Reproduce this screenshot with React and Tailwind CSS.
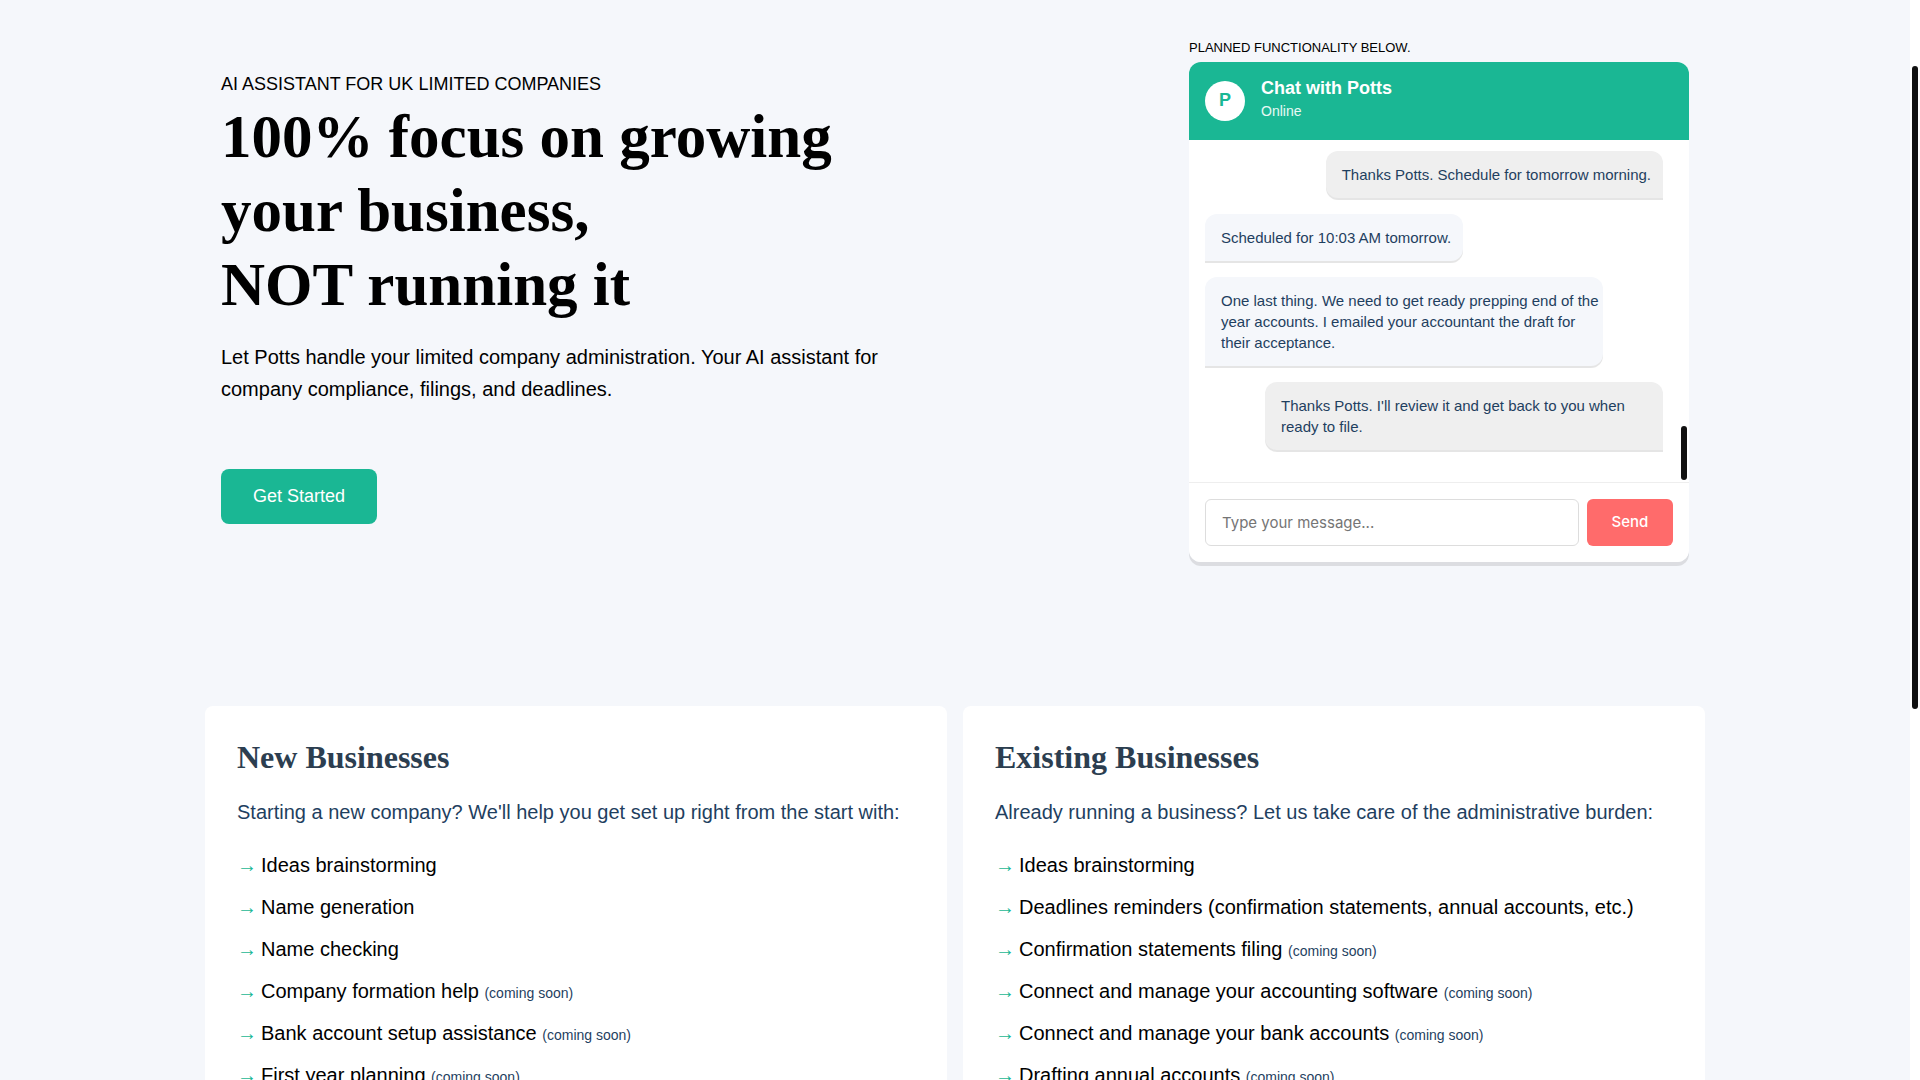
import { useState } from 'react'
import { clsx } from 'clsx'

const MESSAGES = [
  { from: 'user', text: 'Thanks Potts. Schedule for tomorrow morning.' },
  { from: 'potts', text: 'Scheduled for 10:03 AM tomorrow.' },
  {
    from: 'potts',
    text: 'One last thing. We need to get ready prepping end of the year accounts. I emailed your accountant the draft for their acceptance.',
    long: true,
  },
  { from: 'user', text: "Thanks Potts. I'll review it and get back to you when ready to file.", long: true },
]

const PLANS = [
  {
    title: 'New Businesses',
    intro: "Starting a new company? We'll help you get set up right from the start with:",
    items: [
      { label: 'Ideas brainstorming' },
      { label: 'Name generation' },
      { label: 'Name checking' },
      { label: 'Company formation help', soon: true },
      { label: 'Bank account setup assistance', soon: true },
      { label: 'First year planning', soon: true },
    ],
  },
  {
    title: 'Existing Businesses',
    intro: 'Already running a business? Let us take care of the administrative burden:',
    items: [
      { label: 'Ideas brainstorming' },
      { label: 'Deadlines reminders (confirmation statements, annual accounts, etc.)' },
      { label: 'Confirmation statements filing', soon: true },
      { label: 'Connect and manage your accounting software', soon: true },
      { label: 'Connect and manage your bank accounts', soon: true },
      { label: 'Drafting annual accounts', soon: true },
    ],
  },
]

function Message({ from, text, long }) {
  const isUser = from === 'user'
  return (
    <div
      className={clsx(
        'max-w-[398px] rounded-xl py-[13px] pl-4 text-[15px] leading-[21px] text-[#1f3f5f] shadow-[0_2px_0_rgba(0,0,0,0.1)]',
        long ? 'pr-[2px]' : 'pr-3',
        isUser ? 'self-end rounded-br-none bg-[#efefef]' : 'self-start rounded-bl-none bg-[#f5f7fb]',
      )}
    >
      {text}
    </div>
  )
}

function Chat() {
  const [draft, setDraft] = useState('')

  return (
    <div className="overflow-hidden rounded-xl bg-white">
      <div className="flex h-[78px] items-center gap-4 bg-[#1ab794] px-4">
        <div className="flex size-10 items-center justify-center rounded-full bg-white pb-0.5 text-lg font-bold text-[#1ab794]">
          P
        </div>
        <div className="pb-1">
          <h3 className="text-lg leading-6 font-bold text-white">Chat with Potts</h3>
          <p className="text-sm leading-[22px] text-white/90">Online</p>
        </div>
      </div>

      <div className="relative flex flex-col gap-4 pt-[11px] pr-[26px] pb-8 pl-4">
        {MESSAGES.map((message) => (
          <Message key={message.text} {...message} />
        ))}
        <div className="absolute right-[2px] bottom-[2px] h-[54px] w-[6px] rounded-full bg-[#111]" />
      </div>

      <form
        className="flex gap-2 border-t border-[#eee] p-4 font-[Inter,sans-serif] text-[15px]"
        onSubmit={(e) => {
          e.preventDefault()
          setDraft('')
        }}
      >
        <input
          type="text"
          aria-label="Message"
          placeholder="Type your message..."
          value={draft}
          onChange={(e) => setDraft(e.target.value)}
          className="h-[47px] min-w-0 flex-1 rounded-md border border-[#ddd] px-4 placeholder:text-[#757575]"
        />
        <button type="submit" className="w-[86px] rounded-md bg-[#ff6b6b] font-medium text-white">
          Send
        </button>
      </form>
    </div>
  )
}

function PlanCard({ title, intro, items }) {
  return (
    <article className="rounded-lg bg-white p-8">
      <h2 className="font-[Liberation_Serif,serif] text-[32px] leading-[38px] font-bold text-[#2c3e50]">{title}</h2>
      <p className="mt-5 text-xl leading-8 text-[#1f3f5f]">{intro}</p>
      <ul className="mt-4 text-xl">
        {items.map((item) => (
          <li key={item.label} className="flex items-baseline py-[5px] leading-8">
            <span className="w-6 shrink-0 text-[#1ab794]">→</span>
            <span>
              {item.label} {item.soon && <small className="text-sm text-[#1f3f5f]">(coming soon)</small>}
            </span>
          </li>
        ))}
      </ul>
    </article>
  )
}

export default function App() {
  return (
    <div className="relative h-screen overflow-hidden bg-white pr-[10px] font-[Liberation_Sans,Arial,sans-serif] text-black">
      <main className="min-h-full bg-[#f5f7fb]">
        <div className="mx-auto max-w-[1500px]">
          <section className="flex items-start justify-between px-4 pt-9">
            <div className="max-w-[700px] pt-[34px]">
              <p className="text-lg leading-7">AI ASSISTANT FOR UK LIMITED COMPANIES</p>
              <h1 className="mt-0.5 font-[Liberation_Serif,serif] text-[61px] leading-[74px] font-bold">
                100% focus on growing your business,
                <br />
                NOT running it
              </h1>
              <p className="mt-[19px] text-xl leading-8">
                Let Potts handle your limited company administration. Your AI assistant for company compliance, filings,
                and deadlines.
              </p>
              <a
                href="#get-started"
                className="mt-16 inline-block rounded-lg bg-[#1ab794] px-8 py-[13px] text-lg leading-[29px] text-white"
              >
                Get Started
              </a>
            </div>

            <div className="w-[500px] shrink-0">
              <p className="pb-0.5 text-[13px] leading-6">PLANNED FUNCTIONALITY BELOW.</p>
              <div className="rounded-xl shadow-[0_4px_0_rgba(0,0,0,0.1)]">
                <Chat />
              </div>
            </div>
          </section>

          <section className="mt-36 grid grid-cols-2 gap-4">
            {PLANS.map((plan) => (
              <PlanCard key={plan.title} {...plan} />
            ))}
          </section>
        </div>
      </main>

      {/* page scrollbar thumb */}
      <div className="absolute top-[66px] right-[2px] h-[643px] w-[6px] rounded-full bg-[#111]" />
    </div>
  )
}
